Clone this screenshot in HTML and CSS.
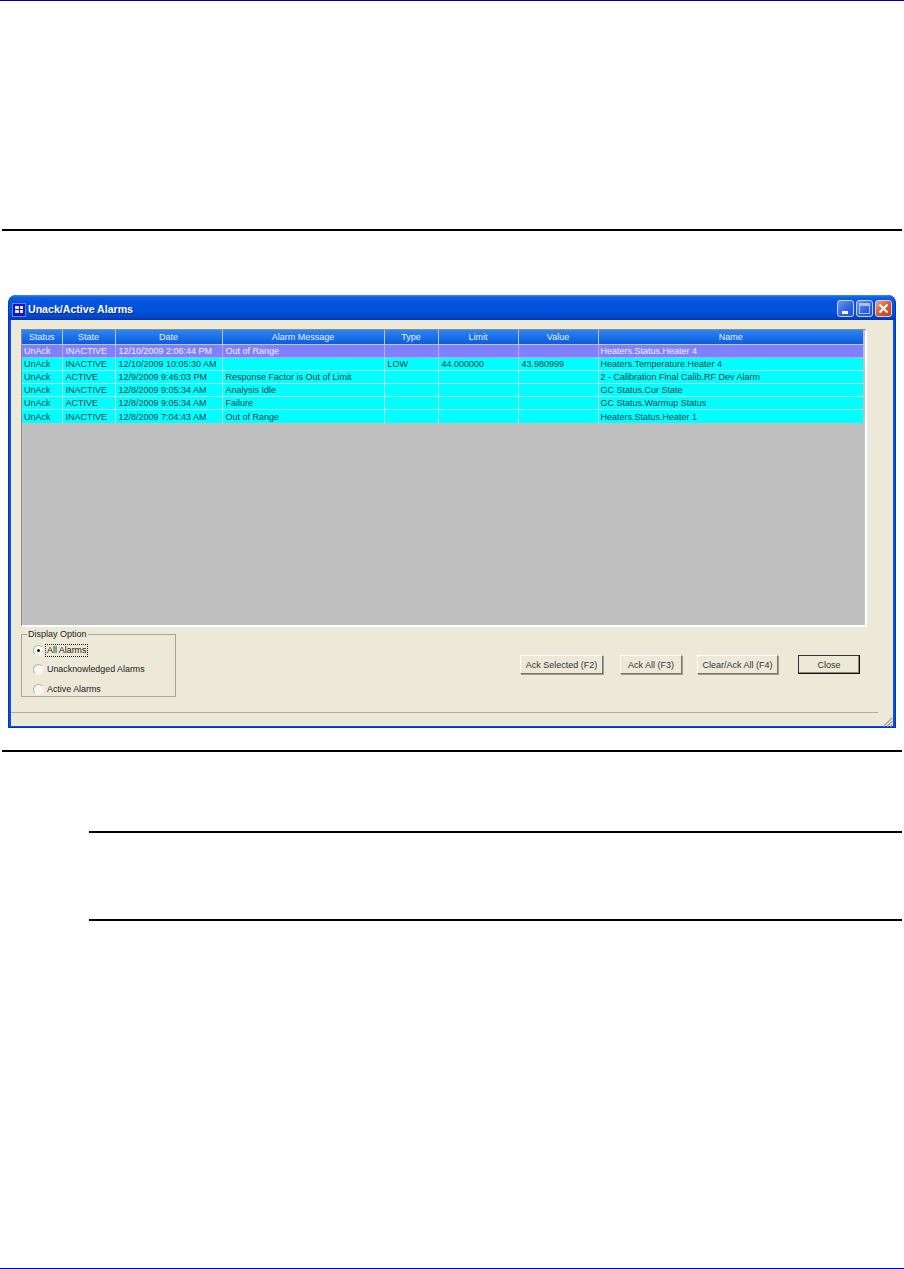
FILE: index.html
```html
<!DOCTYPE html>
<html lang="en">
<head>
<meta charset="utf-8">
<title>Unack/Active Alarms</title>
<link rel="stylesheet" href="styles.css">
</head>
<body>
<div class="page">
  <div class="top-rule"></div>
  <div class="rule rule-a"></div>
  <div class="window">
    <div class="titlebar">
      <span class="app-icon"><i></i><i></i><i></i><i></i></span>
      <span class="title">Unack/Active Alarms</span>
      <span class="controls">
        <span class="ctl ctl-min"><span class="min-glyph"></span></span>
        <span class="ctl ctl-max"><span class="max-glyph"></span></span>
        <span class="ctl ctl-close">
          <svg viewBox="0 0 17 17" width="17" height="17"><path d="M4.5 4.5L12.5 12.5M12.5 4.5L4.5 12.5" stroke="#fff" stroke-width="2.2" fill="none"/></svg>
        </span>
      </span>
    </div>
    <div class="client">
      <div class="grid-wrap">
        <table class="grid">
          <colgroup>
            <col class="c1"><col class="c2"><col class="c3"><col class="c4"><col class="c5"><col class="c6"><col class="c7"><col class="c8">
          </colgroup>
          <thead>
            <tr><th>Status</th><th>State</th><th>Date</th><th>Alarm Message</th><th>Type</th><th>Limit</th><th>Value</th><th>Name</th></tr>
          </thead>
          <tbody>
            <tr class="sel"><td>UnAck</td><td>INACTIVE</td><td>12/10/2009 2:06:44 PM</td><td>Out of Range</td><td></td><td></td><td></td><td>Heaters.Status.Heater 4</td></tr>
            <tr><td>UnAck</td><td>INACTIVE</td><td>12/10/2009 10:05:30 AM</td><td></td><td>LOW</td><td>44.000000</td><td>43.980999</td><td>Heaters.Temperature.Heater 4</td></tr>
            <tr><td>UnAck</td><td>ACTIVE</td><td>12/9/2009 9:46:03 PM</td><td>Response Factor is Out of Limit</td><td></td><td></td><td></td><td>2 - Calibration Final Calib.RF Dev Alarm</td></tr>
            <tr><td>UnAck</td><td>INACTIVE</td><td>12/8/2009 9:05:34 AM</td><td>Analysis Idle</td><td></td><td></td><td></td><td>GC Status.Cur State</td></tr>
            <tr><td>UnAck</td><td>ACTIVE</td><td>12/8/2009 9:05:34 AM</td><td>Failure</td><td></td><td></td><td></td><td>GC Status.Warmup Status</td></tr>
            <tr><td>UnAck</td><td>INACTIVE</td><td>12/8/2009 7:04:43 AM</td><td>Out of Range</td><td></td><td></td><td></td><td>Heaters.Status.Heater 1</td></tr>
          </tbody>
        </table>
      </div>
      <div class="lower">
        <fieldset class="options">
          <legend>Display Option</legend>
          <div class="opt opt-1"><span class="radio on"></span><span class="focus">All Alarms</span></div>
          <div class="opt opt-2"><span class="radio"></span><span>Unacknowledged Alarms</span></div>
          <div class="opt opt-3"><span class="radio"></span><span>Active Alarms</span></div>
        </fieldset>
        <div class="buttons">
          <button class="btn b1">Ack Selected (F2)</button>
          <button class="btn b2">Ack All (F3)</button>
          <button class="btn b3">Clear/Ack All (F4)</button>
          <button class="btn b4 default">Close</button>
        </div>
      </div>
    </div>
    <div class="statusbar">
      <span class="status-line"></span>
      <span class="grip">
        <svg viewBox="0 0 11 11" width="11" height="11"><path d="M10.5 1.5L1.5 10.5M10.5 5L5 10.5M10.5 8.5L8.5 10.5" stroke="#a5a392" stroke-width="1.2" fill="none"/></svg>
      </span>
    </div>
  </div>
  <div class="rule rule-b"></div>
  <div class="note-rule note-a"></div>
  <div class="note-rule note-b"></div>
  <div class="bottom-rule"></div>
</div>
</body>
</html>
```
FILE: styles.css
```css
* { box-sizing: border-box; }
html, body { margin: 0; padding: 0; background: #fff; }
body { font-family: "Liberation Sans", Arial, sans-serif; }
.page { width: 904px; height: 1269px; display: flex; flex-direction: column; overflow: hidden; }
.top-rule { height: 1px; background: #0000c4; flex: none; }
.rule { height: 2px; background: #000; margin: 0 2px; flex: none; }
.rule-a { margin-top: 228px; }
.rule-b { margin-top: 22px; }
.window {
  margin: 64px 0 0 8px; width: 888px; height: 433px; flex: none;
  background: #0a50e0; border-radius: 8px 8px 0 0;
  padding: 0 2px 1px; display: flex; flex-direction: column;
  border: 1px solid #0036c8; border-top: 0;
}
.titlebar {
  height: 25px; flex: none; display: flex; align-items: center;
  margin: 0 -2px; padding: 4px 3px 0 4px;
  background: linear-gradient(#3a94f8 0, #0d60e8 8%, #0453dd 30%, #0453dd 65%, #0344c8 90%, #0236a8 100%);
  border-radius: 8px 8px 0 0;
}
.app-icon {
  width: 12px; height: 12px; background: #1414c8; flex: none; padding: 2px;
  box-shadow: 0 0 0 1px #5f86ec;
  display: grid; grid-template-columns: 1fr 1fr; grid-template-rows: 3px 3px; gap: 1px; align-content: center;
}
.app-icon i { background: #e6ebff; display: block; }
.title { color: #fff; font: bold 10.6px/1 "Liberation Sans", sans-serif; margin-left: 3px; text-shadow: 1px 1px 0 #02288a; }
.controls { margin: 0 0 2px auto; display: flex; gap: 2px; }
.ctl {
  width: 17px; height: 17px; border: 1px solid #c4d2f6; border-radius: 3px; display: block;
  background: linear-gradient(135deg, #6a96f0, #2f62e0 60%, #2050cc); position: relative;
}
.ctl svg { position: absolute; left: -1px; top: -1px; }
.ctl-close { background: linear-gradient(135deg, #f0a488, #e0582e 50%, #c63e1c); }
.min-glyph { position: absolute; left: 4px; bottom: 2px; width: 6px; height: 3px; background: #fff; }
.max-glyph { position: absolute; left: 2px; top: 2px; width: 11px; height: 11px; border: 1px solid #a8c0f8; border-top-width: 3px; }
.client { flex: 1; background: #ece9d8; padding: 9px 0 0 10px; display: flex; flex-direction: column; min-height: 0; }
.grid-wrap {
  width: 846px; height: 298px; flex: none; background: #c0c0c0;
  border-style: solid; border-width: 1px 2px 2px 1px; border-color: #8e8c80 #fff #fff #8e8c80;
  overflow: hidden;
}
.grid { border-collapse: collapse; table-layout: fixed; width: 841px; font-size: 9px; }
.c1 { width: 40px; } .c2 { width: 53px; } .c3 { width: 107px; } .c4 { width: 162px; }
.c5 { width: 54px; } .c6 { width: 80px; } .c7 { width: 80px; } .c8 { width: 265px; }
.grid th {
  height: 14px; padding: 1px 0 0; font-weight: normal; color: #e8f0ff; text-align: center; line-height: 12px;
  background: linear-gradient(#2c84f0, #0c5ce0); border-right: 1px solid #b8c8f0; border-bottom: 1px solid #b8c8f0;
}
.grid th:last-child, .grid td:last-child { border-right: 0; }
.grid td {
  height: 13.2px; padding: 0 0 0 3px; background: #00ffff; color: #1a3c48;
  border-right: 1px solid #b0e8e8; border-bottom: 1px solid #b0e8e8; line-height: 12px;
  white-space: nowrap; overflow: hidden;
}
.grid td:first-child { padding-left: 2px; }
.grid td:last-child { padding-left: 2px; }
.grid tr:last-child td { border-bottom: 0; }
.grid tr.sel td { background: #8080ff; color: #f0f0ff; border-color: #b0b0ff; }
.lower { display: flex; flex: 1; min-height: 0; }
.options {
  margin: 2px 0 0 0; padding: 0; width: 155px; height: 68px; border: 1px solid #a8a696; position: relative;
  font-size: 8.9px; color: #222; flex: none;
}
.options legend { padding: 0 1px; margin-left: 5px; font-size: 9px; line-height: 10px; }
.opt { position: absolute; left: 11px; display: flex; align-items: center; gap: 3px; line-height: 11px; white-space: nowrap; }
.opt-1 { top: 6px; } .opt-2 { top: 25px; } .opt-3 { top: 45px; }
.radio {
  width: 11px; height: 11px; border-radius: 50%; background: #f8f7f0; position: relative; flex: none;
  border: 1px solid; border-color: #b4b2a2 #f4f3ea #f4f3ea #b4b2a2;
}
.radio.on::after { content: ""; position: absolute; left: 3px; top: 3px; width: 3px; height: 3px; border-radius: 50%; background: #111; }
.focus { outline: 1px dotted #222; padding: 0 1px; margin-left: -1px; }
.buttons { margin: 28px 0 0 344px; display: flex; align-items: flex-start; }
.btn {
  height: 19px; padding: 0; font: 9px "Liberation Sans", sans-serif; color: #333; background: #ece9d8;
  border: 1px solid; border-color: #fff #77756a #77756a #fff; box-shadow: 1px 1px 0 #a09e90;
}
.b1 { width: 83px; } .b2 { width: 62px; margin-left: 17px; } .b3 { width: 81px; margin-left: 15px; } .b4 { width: 62px; margin-left: 20px; }
.btn.default { border: 1px solid #111; border-top-color: #333; border-left-color: #333; box-shadow: inset -1px -1px 0 #8a8878; }
.statusbar { height: 14px; flex: none; background: #ece9d8; position: relative; }
.status-line { display: block; height: 1px; background: #b0ae9e; margin-right: 15px; }
.grip { position: absolute; right: 0; bottom: 2px; width: 11px; height: 11px; }
.note-rule { height: 2px; background: #000; margin: 0 2px 0 89px; flex: none; }
.note-a { margin-top: 79px; }
.note-b { margin-top: 86px; }
.bottom-rule { height: 1px; background: #0000c4; margin-top: auto; flex: none; }
```
